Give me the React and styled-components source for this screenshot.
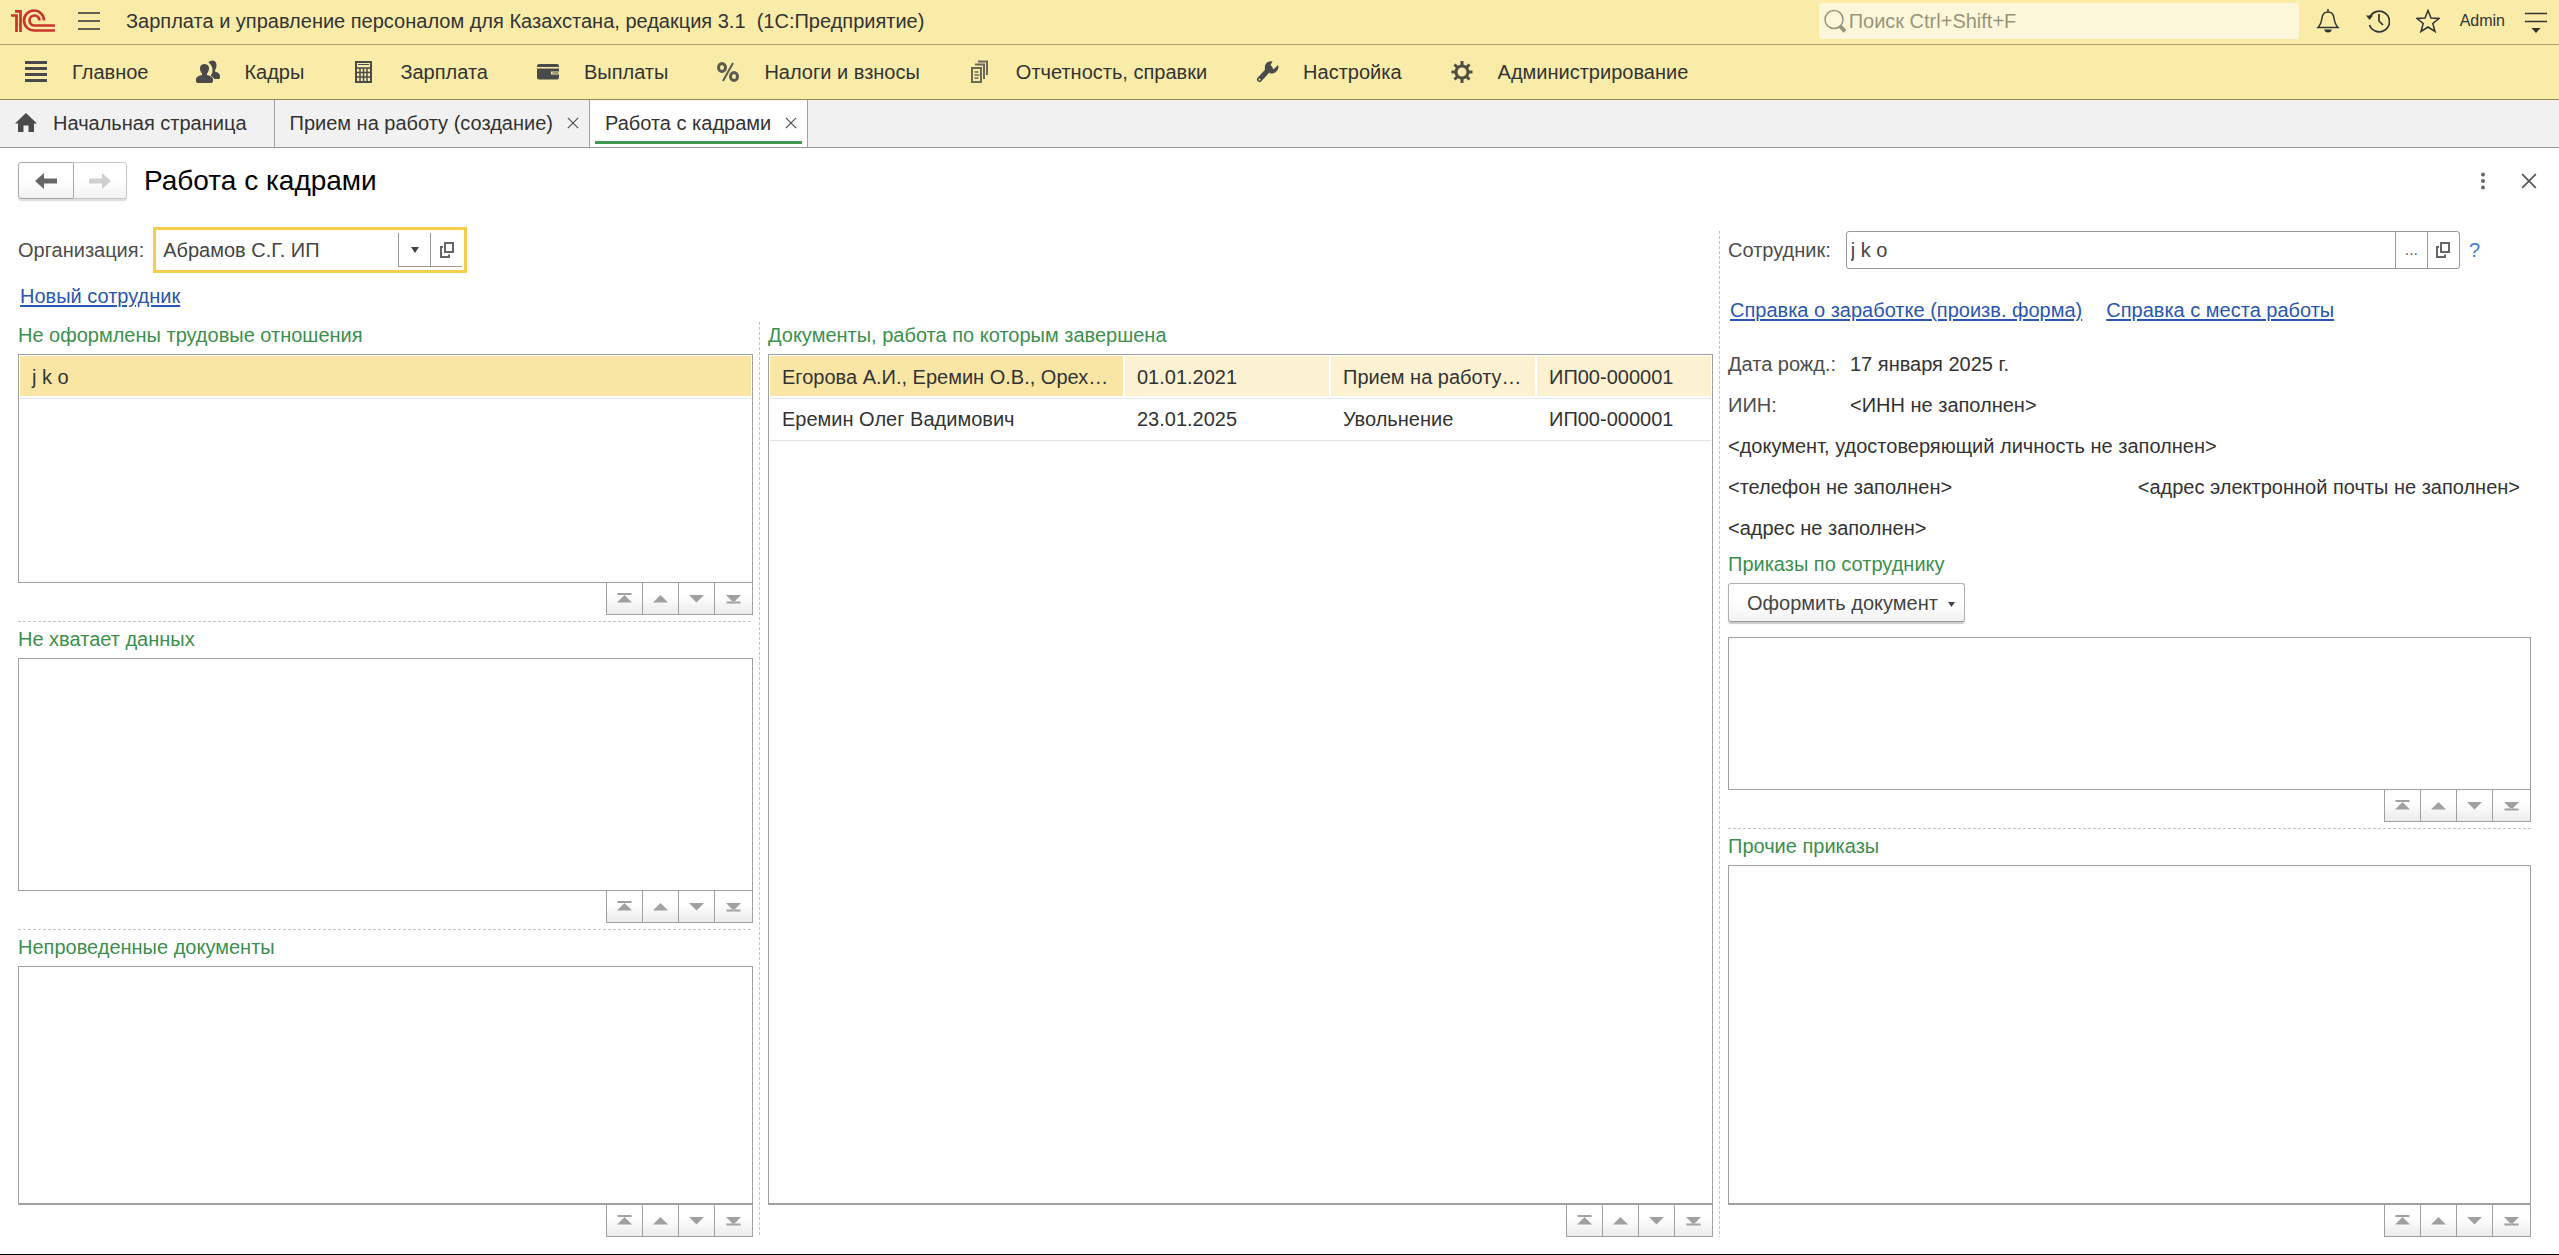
import React from 'react';
import styled, { createGlobalStyle } from 'styled-components';

const menu = [
    { icon: 'list', text: 'Главное' },
    { icon: 'people', text: 'Кадры' },
    { icon: 'calc', text: 'Зарплата' },
    { icon: 'wallet', text: 'Выплаты' },
    { icon: 'percent', text: 'Налоги и взносы' },
    { icon: 'docs', text: 'Отчетность, справки' },
    { icon: 'wrench', text: 'Настройка' },
    { icon: 'gear', text: 'Администрирование' },
];

const documents = [
    ['Егорова А.И., Еремин О.В., Орех…', '01.01.2021', 'Прием на работу…', 'ИП00-000001'],
    ['Еремин Олег Вадимович', '23.01.2025', 'Увольнение', 'ИП00-000001'],
];

const icons = {
    list: <path d="M1 2.5h22M1 8.5h22M1 14.5h22M1 20.5h22" stroke="#4a4a4a" strokeWidth="3" />,
    people: (
        <g fill="#4a4a4a">
            <path d="M12.500 2.500C14-.5 20.500-.5 20.500 5c0 2.500-.7 4-1.500 5v1.500c2 .8 5 1.500 5 4.500v1.500c0 1-.8 1.500-2 1.500h-4c-.5-1.500-1.500-2.500-3-3v-1c2-2.500 2-6.500.5-9-.7-1.500-1.800-2.500-3-3.500z" />
            <path d="M4 8c0-5.500 9-5.500 9 0 0 2.500-.8 4.500-2 5.500v1.500c2 .5 6 1.500 6 4.500v1.500c0 1.500-1 2-2 2H2c-1 0-2-.5-2-2v-1.500c0-3 4-4 6-4.500v-1.500c-1.200-1-2-3-2-5.500z" />
        </g>
    ),
    calc: (
        <g>
            <rect x="4" y="2" width="15" height="20" fill="none" stroke="#4a4a4a" strokeWidth="2" />
            <path d="M4 8h15M4 12.500h15M4 17h15M8 8v14M11.500 8v14M15 8v14" stroke="#4a4a4a" strokeWidth="1.500" />
            <path d="M6 4.500h11" stroke="#4a4a4a" strokeWidth="1" />
        </g>
    ),
    wallet: <path fill="#4a4a4a" d="M1 6q0-2 2-2h18q2 0 2 2v1H1zM1 8.500h22v3h-8v3h8v3q0 2-2 2H3q-2 0-2-2zM16.500 12.500h6v1h-6z" />,
    percent: (
        <g fill="none" stroke="#5c5a50" strokeWidth="3">
            <ellipse cx="6" cy="7.500" rx="3.500" ry="4" />
            <ellipse cx="18" cy="16.500" rx="3.500" ry="4" />
            <path d="M17 3L7 21" strokeWidth="2" />
        </g>
    ),
    docs: (
        <g fill="none" stroke="#6b6855" strokeWidth="2">
            <path d="M4 8h9v14H4zM7 4.500h9V19M10 1.500h9V15" />
            <path d="M6.500 12h4M6.500 15h5M6.500 18h4" strokeWidth="1.500" />
        </g>
    ),
    wrench: (
        <g>
            <path d="M4.500 19.500L15 8" stroke="#4a4a4a" strokeWidth="5" strokeLinecap="round" />
            <path d="M17.500 1.500c-5-1-8.500 3-7.500 8l5.500 4c4 .5 8-2.500 8-7l-.5-1.500-4 4-3-1-.5-3z" fill="#4a4a4a" />
            <circle cx="4.500" cy="19.500" r="1" fill="#f9eca8" />
        </g>
    ),
    gear: (
        <g fill="none" stroke="#4f4d44">
            <circle cx="12" cy="12" r="6" strokeWidth="3" />
            <path d="M12 1v4M12 19v4M1.500 12h3.500M19 12h3.500M4.500 4.500l3 3M16.500 16.500l3 3M4.500 19.500l3-3M16.500 7.500l3-3" strokeWidth="3" />
        </g>
    ),
};

const arrows = [
    { label: 'В начало', d: 'M0 10.500L7.500 3 15 10.500zM.5 1h14v2h-14z' },
    { label: 'Вверх', d: 'M0 10.500L7.500 3 15 10.500z' },
    { label: 'Вниз', d: 'M0 3L7.500 10.500 15 3z' },
    { label: 'В конец', d: 'M0 3L7.500 10.500 15 3zM.5 9.500h14v2h-14z' },
];

const Nav = () => (
    <NavBox>
        {arrows.map((arrow) => (
            <NavBtn key={arrow.label} aria-label={arrow.label}>
                <svg width="15" height="12" viewBox="0 0 15 12" fill="#a0a0a0"><path d={arrow.d} /></svg>
            </NavBtn>
        ))}
    </NavBox>
);

const Panel = ({ title, grow, last, children }) => (
    <Section $grow={grow}>
        {title && <GroupTitle>{title}</GroupTitle>}
        <ListBox $last={last}>{children}</ListBox>
        <Nav />
    </Section>
);

const Cross = ({ size }) => (
    <svg width={size} height={size} viewBox="0 0 14 14">
        <path d="M1 1l12 12M13 1L1 13" stroke="#555" strokeWidth="1.500" />
    </svg>
);

const OpenIcon = () => (
    <svg width="16" height="18" viewBox="0 0 16 18" fill="none" stroke="#666" strokeWidth="2">
        <path d="M6 2h8v9H6zM4 6H2v10h8v-2.500" />
    </svg>
);

const App = () => {
    return (
        <Page>
            <GlobalStyle />
            <TopBar>
                <svg width="45" height="24" viewBox="0 0 45 24" fill="none" stroke="#c8362c" strokeWidth="2.700">
                    <path d="M0 6.500h5.500v16.500M4 2.300h5.500v20.700" />
                    <path d="M33 11.500A10 10 0 1 0 23.500 21.500H44M28.500 11.500A5 5 0 1 0 23.500 16.500H44" />
                </svg>
                <IconBtn aria-label="Меню">
                    <svg width="22" height="20" viewBox="0 0 22 20" stroke="#333" strokeWidth="1.500"><path d="M0 2h22M0 10h22M0 18h22" /></svg>
                </IconBtn>
                <AppTitle>Зарплата и управление персоналом для Казахстана, редакция 3.1&nbsp; (1С:Предприятие)</AppTitle>
                <Search>
                    <svg width="22" height="24" viewBox="0 0 22 24" fill="none" stroke="#98947c">
                        <circle cx="10" cy="10.500" r="9" strokeWidth="1.500" />
                        <path d="M16 17l5 5.500" strokeWidth="4" />
                    </svg>
                    <SearchInput aria-label="Поиск" placeholder="Поиск Ctrl+Shift+F" />
                </Search>
                <Tools>
                    <IconBtn aria-label="Уведомления">
                        <svg width="24" height="24" viewBox="0 0 24 24" fill="none" stroke="#333" strokeWidth="1.500">
                            <path d="M12 0v3M2 18.500c3-3 3.500-6 4-9.500.5-4 3-6 6-6s5.500 2 6 6c.5 3.500 1 6.500 4 9.500z" />
                            <path d="M8 20.500h8q-1 3-4 3t-4-3z" fill="#333" stroke="none" />
                        </svg>
                    </IconBtn>
                    <IconBtn aria-label="История">
                        <svg width="24" height="24" viewBox="0 0 24 24" fill="none" stroke="#333" strokeWidth="1.700">
                            <path d="M3.500 9A10.300 10.300 0 1 1 3.500 16M13 5v7l4 4" />
                            <path d="M0 6.500h7L3.500 11z" fill="#333" stroke="none" />
                        </svg>
                    </IconBtn>
                    <IconBtn aria-label="Избранное">
                        <svg width="24" height="24" viewBox="0 0 24 24" fill="none" stroke="#333" strokeWidth="1.500">
                            <path d="M12 1.500l3 7.500 8 .5-6.200 5 2.200 8-7-4.500-7 4.500 2.200-8L1 9.500 9 9z" />
                        </svg>
                    </IconBtn>
                    <User>Admin</User>
                    <IconBtn aria-label="Сервис">
                        <svg width="22" height="24" viewBox="0 0 22 24" stroke="#333" strokeWidth="1.700">
                            <path d="M0 4.500h22M0 12.500h22" />
                            <path d="M6.500 19h9L11 24z" fill="#333" stroke="none" />
                        </svg>
                    </IconBtn>
                </Tools>
            </TopBar>

            <MenuBar>
                {menu.map((item) => (
                    <MenuItem key={item.text}>
                        <svg width="24" height="24" viewBox="0 0 24 24">{icons[item.icon]}</svg>
                        {item.text}
                    </MenuItem>
                ))}
            </MenuBar>

            <Tabs>
                <Tab $home>
                    <TabLink>
                        <svg width="22" height="20" viewBox="0 0 22 20"><path d="M11 0l11 10.500h-3V19h-5.500v-6.500h-5V19H3v-8.500H0z" fill="#4a4a4a" /></svg>
                        Начальная страница
                    </TabLink>
                </Tab>
                <Tab>
                    <TabLink>Прием на работу (создание)</TabLink>
                    <IconBtn aria-label="Закрыть"><Cross size="12" /></IconBtn>
                </Tab>
                <Tab $active>
                    <TabLink>Работа с кадрами</TabLink>
                    <IconBtn aria-label="Закрыть"><Cross size="12" /></IconBtn>
                </Tab>
            </Tabs>

            <FormHead>
                <History>
                    <HistoryBtn aria-label="Назад">
                        <svg width="22" height="18" viewBox="0 0 22 18"><path d="M0 9l9-8v5.500h13v5H9V17z" fill="#666" /></svg>
                    </HistoryBtn>
                    <HistoryBtn aria-label="Вперед" $off>
                        <svg width="22" height="18" viewBox="0 0 22 18"><path d="M22 9l-9-8v5.500H0v5h13V17z" fill="#cfcfcf" /></svg>
                    </HistoryBtn>
                </History>
                <FormTitle>Работа с кадрами</FormTitle>
                <IconBtn aria-label="Еще">
                    <svg width="6" height="18" viewBox="0 0 6 18" fill="#666"><circle cx="3" cy="2.500" r="2" /><circle cx="3" cy="9" r="2" /><circle cx="3" cy="15.500" r="2" /></svg>
                </IconBtn>
                <IconBtn aria-label="Закрыть форму"><Cross size="16" /></IconBtn>
            </FormHead>

            <Body>
                <LeftArea>
                    <OrgRow>
                        <Label htmlFor="org">Организация:</Label>
                        <OrgField>
                            <FieldInput id="org" defaultValue="Абрамов С.Г. ИП" $pad="7px" />
                            <OrgBtn aria-label="Выбрать">
                                <svg width="8" height="6" viewBox="0 0 8 6"><path d="M0 0h8L4 6z" fill="#444" /></svg>
                            </OrgBtn>
                            <OrgBtn aria-label="Открыть"><OpenIcon /></OrgBtn>
                        </OrgField>
                    </OrgRow>
                    <LinkRow><Link href="#new">Новый сотрудник</Link></LinkRow>
                    <Lists>
                        <Column>
                            <Panel title="Не оформлены трудовые отношения" grow={183}>
                                <Table>
                                    <tbody>
                                        <Row $selected><Cell>j k o</Cell></Row>
                                    </tbody>
                                </Table>
                            </Panel>
                            <Divider />
                            <Panel title="Не хватает данных" grow={231} />
                            <Divider />
                            <Panel title="Непроведенные документы" grow={235} last />
                        </Column>
                        <Splitter />
                        <Column>
                            <Panel title="Документы, работа по которым завершена" grow={1} last>
                                <Table>
                                    <colgroup>
                                        <col />
                                        <col width="206" />
                                        <col width="206" />
                                        <col width="174" />
                                    </colgroup>
                                    <tbody>
                                        {documents.map((doc, index) => (
                                            <Row key={doc[0]} $selected={index === 0}>
                                                {doc.map((text, i) => <Cell key={i}>{text}</Cell>)}
                                            </Row>
                                        ))}
                                    </tbody>
                                </Table>
                            </Panel>
                        </Column>
                    </Lists>
                </LeftArea>
                <Splitter />
                <RightArea>
                    <EmployeeRow>
                        <Label htmlFor="employee">Сотрудник:</Label>
                        <EmployeeField>
                            <FieldInput id="employee" defaultValue="j k o" $pad="4px" />
                            <FieldBtn aria-label="Выбрать сотрудника">...</FieldBtn>
                            <FieldBtn aria-label="Открыть сотрудника"><OpenIcon /></FieldBtn>
                        </EmployeeField>
                        <Help>?</Help>
                    </EmployeeRow>
                    <Refs>
                        <Link href="#income">Справка о заработке (произв. форма)</Link>
                        <Link href="#work">Справка с места работы</Link>
                    </Refs>
                    <Info>
                        <InfoRow><Term>Дата рожд.:</Term><span>17 января 2025 г.</span></InfoRow>
                        <InfoRow><Term>ИИН:</Term><span>&lt;ИНН не заполнен&gt;</span></InfoRow>
                        <InfoRow>&lt;документ, удостоверяющий личность не заполнен&gt;</InfoRow>
                        <InfoRow $spread><span>&lt;телефон не заполнен&gt;</span><span>&lt;адрес электронной почты не заполнен&gt;</span></InfoRow>
                        <InfoRow>&lt;адрес не заполнен&gt;</InfoRow>
                    </Info>
                    <GroupTitle>Приказы по сотруднику</GroupTitle>
                    <DocBtn>
                        Оформить документ
                        <svg width="7" height="8" viewBox="0 0 7 8"><path d="M0 3h7L3.500 8z" fill="#444" /></svg>
                    </DocBtn>
                    <Panel grow={152} />
                    <Divider />
                    <Panel title="Прочие приказы" grow={341} last />
                </RightArea>
            </Body>
        </Page>
    );
};

export default App;

const GlobalStyle = createGlobalStyle`
    * {
        box-sizing: border-box;
    }
    body {
        margin: 0;
        background: #fff;
        color: #333;
        font: 20px/24px "Liberation Sans", Arial, sans-serif;
    }
    button, input {
        font: inherit;
        color: inherit;
    }
`
const Page = styled.div`
    display: flex;
    flex-direction: column;
    min-height: 100vh;
    border-bottom: 1px solid #000;
`
const IconBtn = styled.button`
    display: flex;
    padding: 0;
    border: 0;
    background: none;
`
// верхняя панель
const TopBar = styled.header`
    display: flex;
    align-items: center;
    height: 45px;
    padding: 0 12px 2px 11px;
    gap: 22px;
    background: #f9eca8;
    border-bottom: 1px solid #a9a179;
`
const AppTitle = styled.div`
    flex: 1;
    padding-left: 4px;
    white-space: pre;
`
const Search = styled.div`
    display: flex;
    align-items: center;
    width: 480px;
    height: 36px;
    padding-left: 5px;
    gap: 3px;
    background: #fdf7da;
    border-radius: 3px;
`
const SearchInput = styled.input`
    flex: 1;
    min-width: 0;
    padding: 0;
    border: 0;
    outline: 0;
    background: none;
    &::placeholder {
        color: #98947c;
        opacity: 1;
    }
`
const Tools = styled.div`
    display: flex;
    align-items: center;
    gap: 26px;
    margin-left: -5px;
`
const User = styled.span`
    margin: 0 -6px;
    font-size: 16px;
`
const MenuBar = styled.nav`
    display: flex;
    align-items: center;
    height: 55px;
    padding-left: 24px;
    gap: 48px;
    background: #f9eca8;
    border-bottom: 1px solid #8f8a5e;
`
const MenuItem = styled.button`
    display: flex;
    align-items: center;
    padding: 0;
    gap: 24px;
    border: 0;
    background: none;
    white-space: nowrap;
`
const Tabs = styled.div`
    display: flex;
    height: 48px;
    background: #f1f1f1;
    border-bottom: 1px solid #979797;
`
const Tab = styled.div`
    display: flex;
    align-items: center;
    padding: ${(props) => (props.$home ? '0 27px 2px 15px' : '0 10px 2px 15px')};
    gap: 14px;
    border-right: 1px solid #a0a0a0;
    background: ${(props) => (props.$active ? 'linear-gradient(#3f9b54, #3f9b54) center bottom 3px / calc(100% - 10px) 3px no-repeat #fff' : 'none')};
`
const TabLink = styled.button`
    display: flex;
    align-items: center;
    padding: 0;
    gap: 16px;
    border: 0;
    background: none;
`
// заголовок формы
const FormHead = styled.div`
    display: flex;
    align-items: center;
    padding: 14px 22px 0 18px;
    gap: 35px;
`
const History = styled.div`
    display: flex;
    border-radius: 3px;
    box-shadow: 0 2px 1px #ddd;
`
const HistoryBtn = styled.button`
    display: flex;
    align-items: center;
    justify-content: center;
    width: ${(props) => (props.$off ? '53px' : '56px')};
    height: 37px;
    padding: 0;
    border: 1px solid ${(props) => (props.$off ? '#c8c8c8' : '#a8a8a8')};
    border-left-width: ${(props) => (props.$off ? '0' : '1px')};
    border-radius: ${(props) => (props.$off ? '0 3px 3px 0' : '3px 0 0 3px')};
    background: linear-gradient(#fff 50%, #f2f2f2);
`
const FormTitle = styled.h1`
    flex: 1;
    margin: 0 0 0 -18px;
    color: #000;
    font-size: 28px;
    font-weight: normal;
    line-height: 36px;
`
const Body = styled.main`
    flex: 1;
    display: grid;
    grid-template-columns: 1695fr 15px 803fr;
    padding: 28px 28px 17px 18px;
`
const LeftArea = styled.div`
    display: flex;
    flex-direction: column;
    min-width: 0;
`
const RightArea = styled.div`
    display: flex;
    flex-direction: column;
    min-width: 0;
    padding-top: 4px;
`
const Lists = styled.div`
    flex: 1;
    display: grid;
    grid-template-columns: 735fr 15px 945fr;
`
const Column = styled.div`
    display: flex;
    flex-direction: column;
    min-width: 0;
`
const Splitter = styled.div`
    width: 1px;
    margin: 4px 0 0 6px;
    background: repeating-linear-gradient(#c4c4c4 0 3px, transparent 3px 5px);
`
const Divider = styled.div`
    height: 1px;
    margin-top: 6px;
    background: repeating-linear-gradient(90deg, #c4c4c4 0 3px, transparent 3px 5px);
`
const Section = styled.section`
    display: flex;
    flex-direction: column;
    flex: ${(props) => props.$grow} 1 auto;
`
const GroupTitle = styled.h2`
    margin: 0;
    padding: 5px 0 7px;
    color: #3c8f4e;
    font-size: 20px;
    font-weight: normal;
    line-height: 24px;
`
const ListBox = styled.div`
    flex: 1 1 0;
    border: 1px solid #a0a0a0;
    border-bottom-width: ${(props) => (props.$last ? '2px' : '1px')};
    padding: 1px;
`
const NavBox = styled.div`
    display: flex;
    align-self: flex-end;
    margin-top: -1px;
    border: solid #a0a0a0;
    border-width: 1px 0 1px 1px;
`
const NavBtn = styled.button`
    display: flex;
    align-items: center;
    justify-content: center;
    width: 36px;
    height: 31px;
    padding: 0 0 1px;
    border: 0;
    border-right: 1px solid #a0a0a0;
    background: linear-gradient(#fff 40%, #ebebeb);
    &:last-child {
        width: 38px;
    }
`
const Table = styled.table`
    width: 100%;
    table-layout: fixed;
    border-collapse: collapse;
`
const Cell = styled.td`
    height: 42px;
    padding: 0 4px 0 12px;
    border-bottom: 1px solid #e4e4e4;
    overflow: hidden;
    text-overflow: ellipsis;
    white-space: nowrap;
`
const Row = styled.tr`
    ${Cell} {
        background: ${(props) => (props.$selected ? '#fcf2d2' : '#fff')};
        box-shadow: inset -2px -2px #fff;
    }
    ${Cell}:first-child {
        background: ${(props) => (props.$selected ? '#f9e6a5' : '#fff')};
    }
    ${Cell}:last-child {
        box-shadow: inset 0 -2px #fff;
    }
`
const Label = styled.label`
    color: #4d4d4d;
    white-space: nowrap;
`
const OrgRow = styled.div`
    display: flex;
    align-items: center;
    gap: 9px;
`
const OrgField = styled.div`
    display: flex;
    width: 314px;
    height: 46px;
    padding: 3px 2px 3px 0;
    border: 3px solid #f5cf4b;
`
const FieldInput = styled.input`
    flex: 1;
    min-width: 0;
    padding: 0 0 0 ${(props) => props.$pad};
    border: 0;
    outline: 0;
    background: none;
    color: #444;
`
const FieldBtn = styled.button`
    display: flex;
    align-items: center;
    justify-content: center;
    width: 32px;
    padding: 0;
    border: 0;
    border-left: 1px solid #999;
    background: none;
    color: #666;
    font-size: 16px;
`
const OrgBtn = styled(FieldBtn)`
    border-bottom: 1px solid #999;
`
const LinkRow = styled.div`
    padding: 11px 0 10px 2px;
`
const Link = styled.a`
    color: #2a56b0;
    text-decoration: underline;
    text-decoration-thickness: 2px;
    text-underline-offset: 2px;
`
const EmployeeRow = styled.div`
    display: flex;
    align-items: center;
    gap: 15px;
    padding-right: 66px;
`
const EmployeeField = styled.div`
    flex: 1;
    display: flex;
    height: 38px;
    border: 1px solid #999;
    border-radius: 3px;
`
const Help = styled.span`
    margin: 0 -15px 0 -6px;
    color: #3d7cc9;
`
const Refs = styled.div`
    display: flex;
    gap: 24px;
    padding: 29px 0 30px 2px;
`
const Info = styled.div`
    display: flex;
    flex-direction: column;
    gap: 17px;
    padding-bottom: 7px;
`
const InfoRow = styled.div`
    display: flex;
    justify-content: ${(props) => (props.$spread ? 'space-between' : 'flex-start')};
    padding-right: 11px;
`
const Term = styled.span`
    width: 122px;
    color: #4d4d4d;
`
const DocBtn = styled.button`
    display: flex;
    align-items: center;
    align-self: flex-start;
    height: 39px;
    margin-bottom: 15px;
    padding: 0 9px 0 18px;
    gap: 10px;
    border: 1px solid #b0b0b0;
    border-bottom-color: #999;
    border-radius: 3px;
    background: linear-gradient(#fff 50%, #f2f2f2);
    box-shadow: 0 2px 1px #ccc;
    color: #444;
`
